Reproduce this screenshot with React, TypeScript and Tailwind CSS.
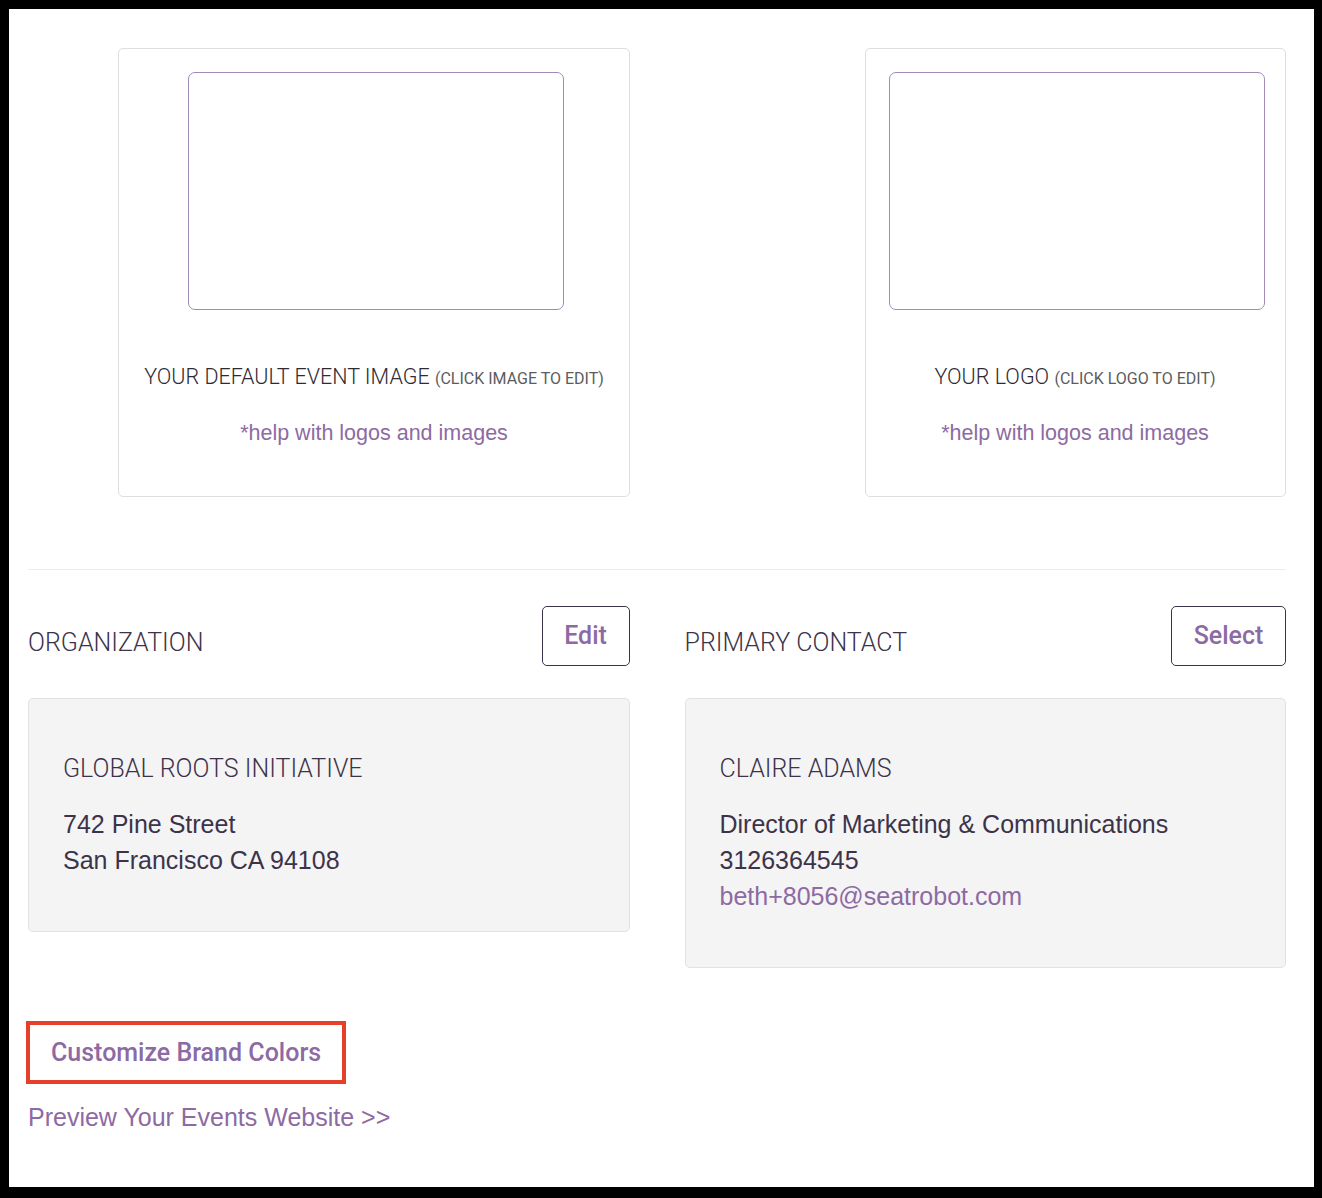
import React from 'react';

const purple = 'text-[#8d6aa3]';

const ImageCard: React.FC<{ title: string; hint: string; className: string; frameClass: string }> = ({
  title,
  hint,
  className,
  frameClass,
}) => (
  <div className={`border border-[#dedede] rounded-[5px] bg-white pt-[23px] pb-[51px] ${className}`}>
    <div className={`w-[376px] h-[238px] border border-[#a38bb8] rounded-[7px] ${frameClass}`} />
    <p className="mt-[55px] text-center font-['Roboto'] font-light text-[21.5px] leading-[24px] text-[#2f2a33]">
      {title}{' '}
      <span className="font-normal text-[16px] text-[#5c5c5c]">{hint}</span>
    </p>
    <a className={`block mt-[30px] text-center font-['Liberation_Sans',Arial,sans-serif] text-[21.5px] leading-[24px] ${purple}`}>
      *help with logos and images
    </a>
  </div>
);

const OutlineButton: React.FC<{ label: string; width: string }> = ({ label, width }) => (
  <button className={`h-[60px] ${width} border border-[#3d3349] rounded-[5px] bg-white font-['Roboto'] font-medium text-[25px] ${purple}`}>
    {label}
  </button>
);

const InfoBox: React.FC<{ heading: string; action: string; actionWidth: string; title: string; children: React.ReactNode }> = ({
  heading,
  action,
  actionWidth,
  title,
  children,
}) => (
  <div>
    <div className="flex items-center justify-between">
      <h3 className="pt-[13px] font-['Roboto'] font-light text-[25px] leading-[30px] text-[#3d3349]">{heading}</h3>
      <OutlineButton label={action} width={actionWidth} />
    </div>
    <div className="mt-[32px] bg-[#f4f4f4] border border-[#e2e2e2] rounded-[5px] pl-[34px] pr-6 pt-[52px] pb-[53px]">
      <p className="font-['Roboto'] font-light text-[25px] leading-[36px] text-[#3d3349]">{title}</p>
      <div className="mt-[19px] font-['Liberation_Sans',Arial,sans-serif] text-[25px] leading-[36px] text-[#3d3349]">
        {children}
      </div>
    </div>
  </div>
);

export default function App() {
  return (
    <div className="w-[1322px] h-[1198px] bg-black pt-[9px] pl-[9px] pr-[8px] pb-[11px]">
      <div className="h-full bg-white pl-[19px] pr-[28px] pt-[39px]">
        {/* Images */}
        <div className="grid grid-cols-2 gap-[55px]">
          <ImageCard
            className="ml-[90px] w-[512px]"
            frameClass="ml-[69px]"
            title="YOUR DEFAULT EVENT IMAGE"
            hint="(CLICK IMAGE TO EDIT)"
          />
          <ImageCard
            className="ml-[180px] w-[421px]"
            frameClass="ml-[23px]"
            title="YOUR LOGO"
            hint="(CLICK LOGO TO EDIT)"
          />
        </div>

        <div className="mt-[72px] border-t border-[#ececec]" />

        {/* Organization / contact */}
        <div className="mt-[36px] grid grid-cols-2 gap-[55px] items-start">
          <InfoBox heading="ORGANIZATION" action="Edit" actionWidth="w-[88px]" title="GLOBAL ROOTS INITIATIVE">
            <p>742 Pine Street</p>
            <p>San Francisco CA 94108</p>
          </InfoBox>
          <InfoBox heading="PRIMARY CONTACT" action="Select" actionWidth="w-[115px]" title="CLAIRE ADAMS">
            <p>Director of Marketing &amp; Communications</p>
            <p>3126364545</p>
            <a className={`block ${purple}`}>beth+8056@seatrobot.com</a>
          </InfoBox>
        </div>

        {/* Footer actions */}
        <button className={`block mt-[53px] -ml-[2px] w-[320px] h-[63px] border-4 border-[#e5402a] bg-white pl-[21px] text-left font-['Roboto'] font-medium text-[25px] ${purple}`}>
          Customize Brand Colors
        </button>
        <a className={`block mt-[19px] font-['Liberation_Sans',Arial,sans-serif] text-[25px] leading-[28px] ${purple}`}>
          Preview Your Events Website &gt;&gt;
        </a>
      </div>
    </div>
  );
}
